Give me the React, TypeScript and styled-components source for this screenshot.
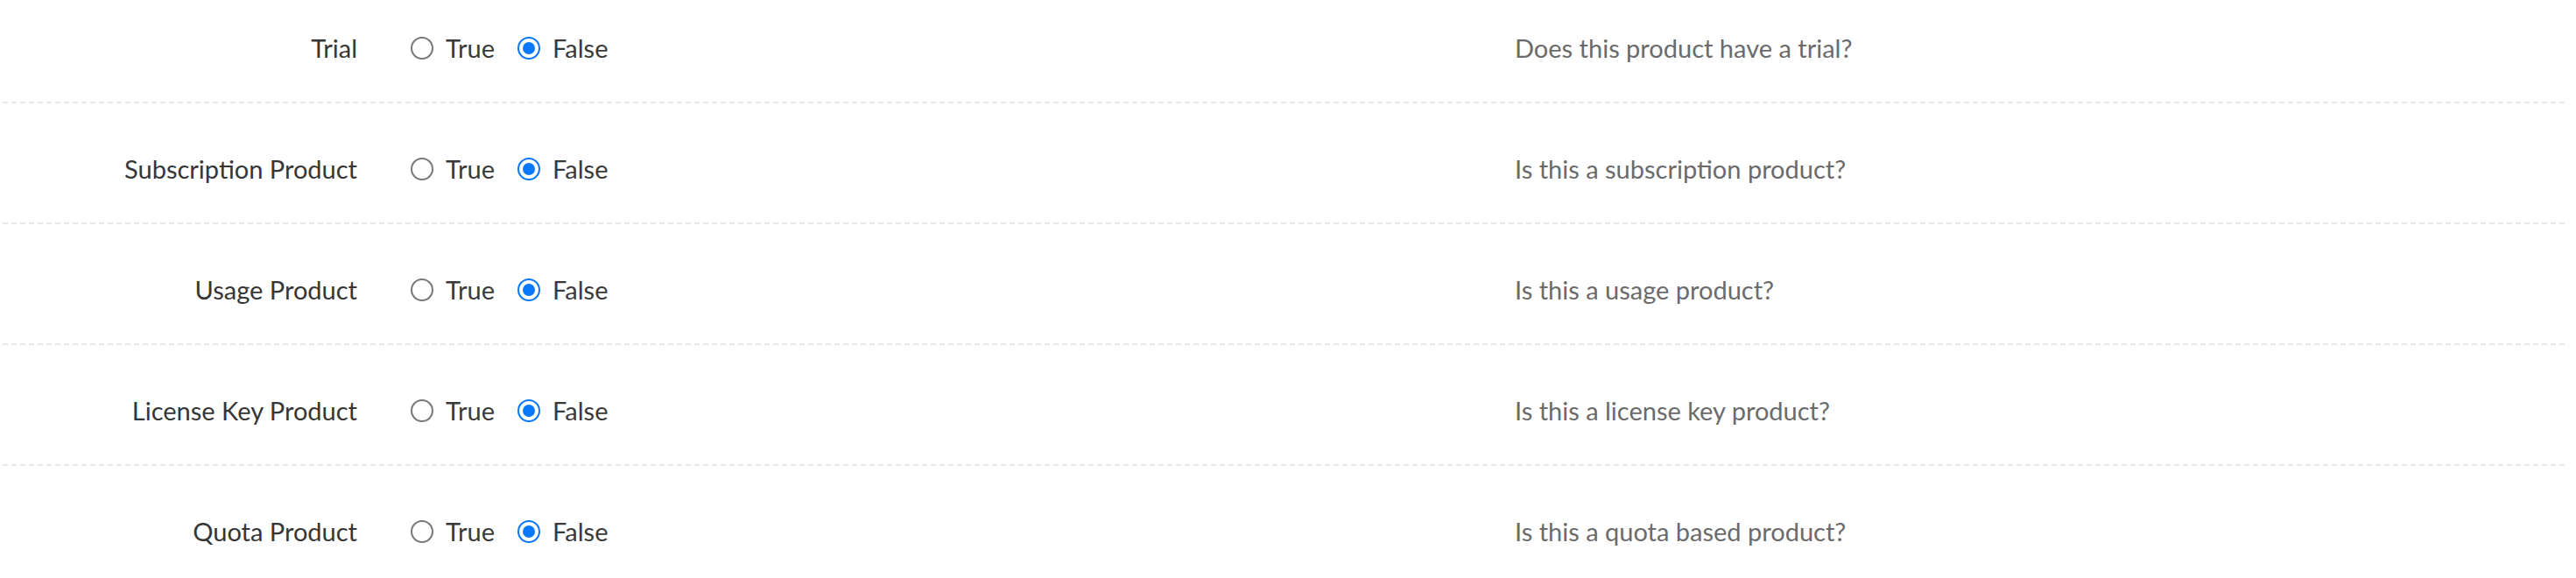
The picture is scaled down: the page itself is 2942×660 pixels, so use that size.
import React from 'react';
import styled, { createGlobalStyle } from 'styled-components';

const rows = [
  { label: 'Trial', help: 'Does this product have a trial?' },
  { label: 'Subscription Product', help: 'Is this a subscription product?' },
  { label: 'Usage Product', help: 'Is this a usage product?' },
  { label: 'License Key Product', help: 'Is this a license key product?' },
  { label: 'Quota Product', help: 'Is this a quota based product?' },
];

/**
 * Product flags form
 */
const App = () => {
  return (
    <>
      <GlobalStyle />
      <Form>
        {rows.map((row) => (
          <FieldRow key={row.label}>
            <Label>{row.label}</Label>
            <OptionGroup>
              <Option>
                <Radio checked={false} />
                <OptionText>True</OptionText>
              </Option>
              <Option>
                <Radio checked />
                <OptionText>False</OptionText>
              </Option>
            </OptionGroup>
            <HelpText>{row.help}</HelpText>
          </FieldRow>
        ))}
      </Form>
    </>
  );
};

const GlobalStyle = createGlobalStyle`
  html, body {
    margin: 0;
    padding: 0;
    background: #ffffff;
    overflow: hidden;
  }

  body {
    font-family: Lato, 'Noto Sans', sans-serif;
    font-size: 29px;
  }
`;

const Form = styled.div`
  width: 2930px;
  margin-top: -20px;
`;

const FieldRow = styled.div`
  display: grid;
  grid-template-columns: 408px 1322px 1fr;
  align-items: center;
  height: 138px;
  box-sizing: border-box;
  padding: 55px 0 43px;
  line-height: 40px;
  background-image: linear-gradient(to right, #e6e8eb 6px, transparent 6px);
  background-size: 10px 2px;
  background-repeat: repeat-x;
  background-position: 3px bottom;
`;

const Label = styled.label`
  text-align: right;
  color: #363636;
  white-space: nowrap;
`;

const OptionGroup = styled.div`
  display: flex;
  align-items: center;
  gap: 26px;
  padding-left: 61px;
`;

const Option = styled.label`
  display: flex;
  align-items: center;
  gap: 14px;
  cursor: pointer;
`;

const Radio = styled.span<{ checked: boolean }>`
  display: inline-flex;
  align-items: center;
  justify-content: center;
  box-sizing: border-box;
  width: 26px;
  height: 26px;
  border-radius: 50%;
  border: 2px solid ${(p) => (p.checked ? '#0a78fa' : '#787878')};
  background: #ffffff;

  &::after {
    content: '';
    display: ${(p) => (p.checked ? 'block' : 'none')};
    width: 14px;
    height: 14px;
    border-radius: 50%;
    background: #0a78fa;
  }
`;

const OptionText = styled.span`
  color: #3a3a3a;
`;

const HelpText = styled.div`
  color: #6b6b6b;
  white-space: nowrap;
`;

export default App;
